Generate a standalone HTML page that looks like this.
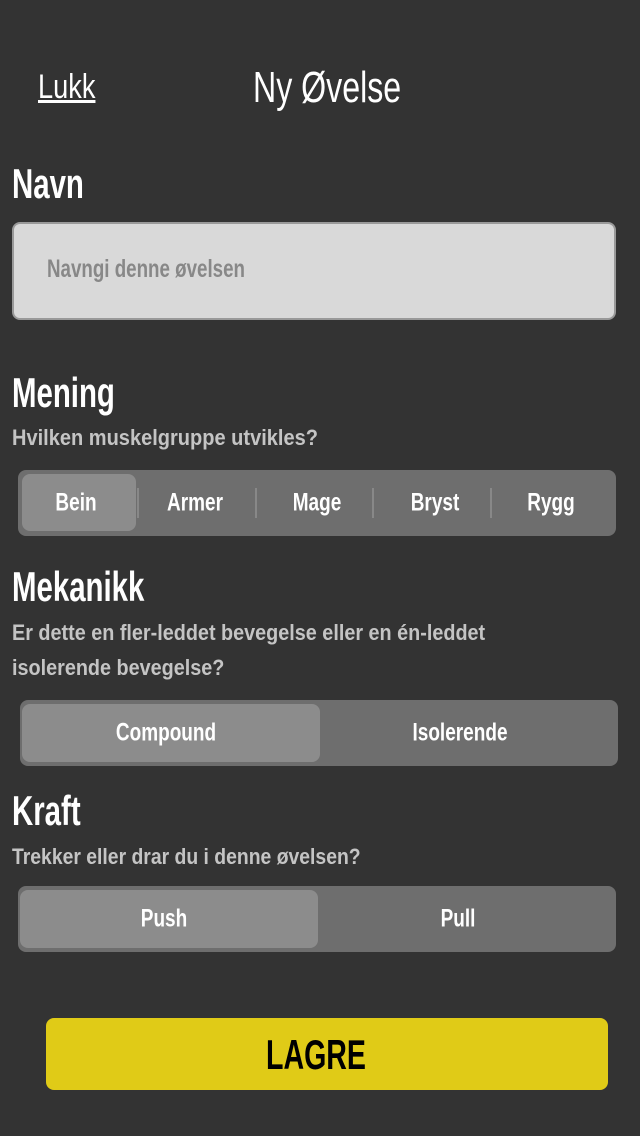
<!DOCTYPE html>
<html><head><meta charset="utf-8"><style>
*{margin:0;padding:0;box-sizing:border-box}
body{width:640px;height:1136px;background:#333;font-family:"Liberation Sans",sans-serif;color:#fff;position:relative;overflow:hidden}
.a{position:absolute;white-space:nowrap;line-height:1;transform-origin:0 0;transform:scaleX(.8)}
.h{font-size:42px;left:12px;font-weight:bold;transform:scaleX(.7)}
.s{font-size:22px;color:#c4c4c4;left:12px;font-weight:bold;transform:scaleX(.88)}
.seg{position:absolute;background:#6e6e6e;border-radius:8px}
.sel{position:absolute;background:#8c8c8c;border-radius:8px}
.t{position:absolute;font-size:25px;font-weight:bold;transform:translate(-50%,-50%) scaleX(.76);white-space:nowrap}
.d{position:absolute;width:2px;height:30px;background:#888}
</style></head><body>
<div class="a" style="left:38px;top:70px;font-size:34px;text-decoration:underline;transform:scaleX(.8)">Lukk</div>
<div class="a" style="left:253px;top:66px;font-size:44px;transform:scaleX(.73)">Ny Øvelse</div>
<div class="a h" style="top:163px">Navn</div>
<div style="position:absolute;left:12px;top:222px;width:604px;height:98px;background:#d9d9d9;border:2px solid #999;border-radius:8px"></div>
<div class="a" style="left:47px;top:257px;font-size:25px;color:#888;font-weight:bold;transform:scaleX(.75)">Navngi denne øvelsen</div>
<div class="a h" style="top:372px">Mening</div>
<div class="a s" style="top:427px;transform:scaleX(.91)">Hvilken muskelgruppe utvikles?</div>
<div class="seg" style="left:18px;top:470px;width:598px;height:66px"></div>
<div class="sel" style="left:22px;top:474px;width:114px;height:57px"></div>
<div class="d" style="left:137px;top:488px"></div><div class="d" style="left:255px;top:488px"></div><div class="d" style="left:372px;top:488px"></div><div class="d" style="left:490px;top:488px"></div>
<div class="t" style="left:76px;top:503px">Bein</div>
<div class="t" style="left:195px;top:503px">Armer</div>
<div class="t" style="left:317px;top:503px">Mage</div>
<div class="t" style="left:435px;top:503px">Bryst</div>
<div class="t" style="left:551px;top:503px">Rygg</div>
<div class="a h" style="top:566px">Mekanikk</div>
<div class="a s" style="top:622px;transform:scaleX(.9)">Er dette en fler-leddet bevegelse eller en én-leddet</div>
<div class="a s" style="top:657px;transform:scaleX(.9)">isolerende bevegelse?</div>
<div class="seg" style="left:20px;top:700px;width:598px;height:66px"></div>
<div class="sel" style="left:22px;top:704px;width:298px;height:58px"></div>
<div class="t" style="left:166px;top:733px">Compound</div>
<div class="t" style="left:460px;top:733px">Isolerende</div>
<div class="a h" style="top:790px">Kraft</div>
<div class="a s" style="top:846px;transform:scaleX(.88)">Trekker eller drar du i denne øvelsen?</div>
<div class="seg" style="left:18px;top:886px;width:598px;height:66px"></div>
<div class="sel" style="left:20px;top:890px;width:298px;height:58px"></div>
<div class="t" style="left:164px;top:919px">Push</div>
<div class="t" style="left:458px;top:919px">Pull</div>
<div style="position:absolute;left:46px;top:1018px;width:562px;height:72px;background:#e0cb17;border-radius:8px"></div>
<div class="t" style="left:316px;top:1055px;color:#000;font-size:42px;transform:translate(-50%,-50%) scaleX(.68)">LAGRE</div>
</body></html>
